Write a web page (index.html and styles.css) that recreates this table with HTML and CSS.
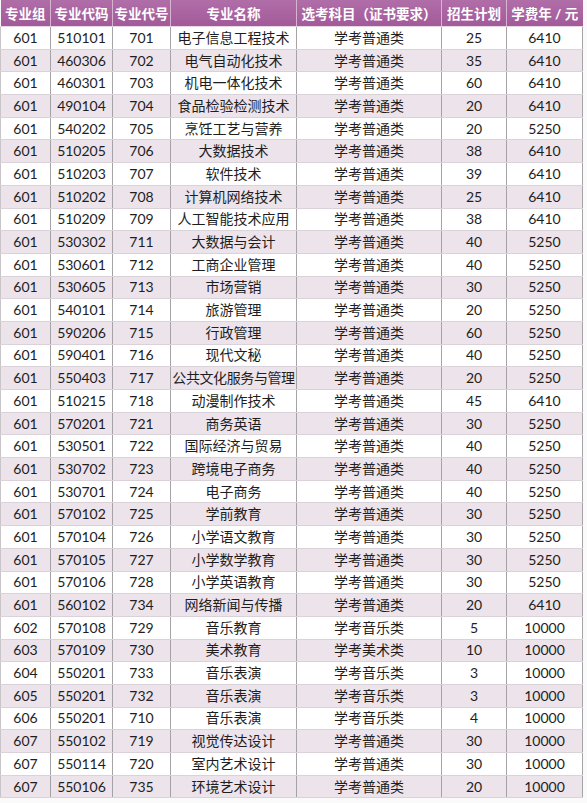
FILE: index.html
```html
<!DOCTYPE html>
<html lang="zh">
<head>
<meta charset="utf-8">
<link rel="stylesheet" href="styles.css">
</head>
<body>
<table class="plan">
<colgroup>
<col class="c1"><col class="c2"><col class="c3"><col class="c4"><col class="c5"><col class="c6"><col class="c7">
</colgroup>
<thead>
<tr><th>专业组</th><th>专业代码</th><th>专业代号</th><th>专业名称</th><th>选考科目（证书要求）</th><th>招生计划</th><th>学费年 / 元</th></tr>
</thead>
<tbody>
<tr><td>601</td><td>510101</td><td>701</td><td>电子信息工程技术</td><td>学考普通类</td><td>25</td><td>6410</td></tr>
<tr><td>601</td><td>460306</td><td>702</td><td>电气自动化技术</td><td>学考普通类</td><td>35</td><td>6410</td></tr>
<tr><td>601</td><td>460301</td><td>703</td><td>机电一体化技术</td><td>学考普通类</td><td>60</td><td>6410</td></tr>
<tr><td>601</td><td>490104</td><td>704</td><td>食品检验检测技术</td><td>学考普通类</td><td>20</td><td>6410</td></tr>
<tr><td>601</td><td>540202</td><td>705</td><td>烹饪工艺与营养</td><td>学考普通类</td><td>20</td><td>5250</td></tr>
<tr><td>601</td><td>510205</td><td>706</td><td>大数据技术</td><td>学考普通类</td><td>38</td><td>6410</td></tr>
<tr><td>601</td><td>510203</td><td>707</td><td>软件技术</td><td>学考普通类</td><td>39</td><td>6410</td></tr>
<tr><td>601</td><td>510202</td><td>708</td><td>计算机网络技术</td><td>学考普通类</td><td>25</td><td>6410</td></tr>
<tr><td>601</td><td>510209</td><td>709</td><td>人工智能技术应用</td><td>学考普通类</td><td>38</td><td>6410</td></tr>
<tr><td>601</td><td>530302</td><td>711</td><td>大数据与会计</td><td>学考普通类</td><td>40</td><td>5250</td></tr>
<tr><td>601</td><td>530601</td><td>712</td><td>工商企业管理</td><td>学考普通类</td><td>40</td><td>5250</td></tr>
<tr><td>601</td><td>530605</td><td>713</td><td>市场营销</td><td>学考普通类</td><td>30</td><td>5250</td></tr>
<tr><td>601</td><td>540101</td><td>714</td><td>旅游管理</td><td>学考普通类</td><td>20</td><td>5250</td></tr>
<tr><td>601</td><td>590206</td><td>715</td><td>行政管理</td><td>学考普通类</td><td>60</td><td>5250</td></tr>
<tr><td>601</td><td>590401</td><td>716</td><td>现代文秘</td><td>学考普通类</td><td>40</td><td>5250</td></tr>
<tr><td>601</td><td>550403</td><td>717</td><td class="tight">公共文化服务与管理</td><td>学考普通类</td><td>20</td><td>5250</td></tr>
<tr><td>601</td><td>510215</td><td>718</td><td>动漫制作技术</td><td>学考普通类</td><td>45</td><td>6410</td></tr>
<tr><td>601</td><td>570201</td><td>721</td><td>商务英语</td><td>学考普通类</td><td>30</td><td>5250</td></tr>
<tr><td>601</td><td>530501</td><td>722</td><td>国际经济与贸易</td><td>学考普通类</td><td>40</td><td>5250</td></tr>
<tr><td>601</td><td>530702</td><td>723</td><td>跨境电子商务</td><td>学考普通类</td><td>40</td><td>5250</td></tr>
<tr><td>601</td><td>530701</td><td>724</td><td>电子商务</td><td>学考普通类</td><td>40</td><td>5250</td></tr>
<tr><td>601</td><td>570102</td><td>725</td><td>学前教育</td><td>学考普通类</td><td>30</td><td>5250</td></tr>
<tr><td>601</td><td>570104</td><td>726</td><td>小学语文教育</td><td>学考普通类</td><td>30</td><td>5250</td></tr>
<tr><td>601</td><td>570105</td><td>727</td><td>小学数学教育</td><td>学考普通类</td><td>30</td><td>5250</td></tr>
<tr><td>601</td><td>570106</td><td>728</td><td>小学英语教育</td><td>学考普通类</td><td>30</td><td>5250</td></tr>
<tr><td>601</td><td>560102</td><td>734</td><td>网络新闻与传播</td><td>学考普通类</td><td>20</td><td>6410</td></tr>
<tr><td>602</td><td>570108</td><td>729</td><td>音乐教育</td><td>学考音乐类</td><td>5</td><td>10000</td></tr>
<tr><td>603</td><td>570109</td><td>730</td><td>美术教育</td><td>学考美术类</td><td>10</td><td>10000</td></tr>
<tr><td>604</td><td>550201</td><td>733</td><td>音乐表演</td><td>学考音乐类</td><td>3</td><td>10000</td></tr>
<tr><td>605</td><td>550201</td><td>732</td><td>音乐表演</td><td>学考音乐类</td><td>3</td><td>10000</td></tr>
<tr><td>606</td><td>550201</td><td>710</td><td>音乐表演</td><td>学考音乐类</td><td>4</td><td>10000</td></tr>
<tr><td>607</td><td>550102</td><td>719</td><td>视觉传达设计</td><td>学考普通类</td><td>30</td><td>10000</td></tr>
<tr><td>607</td><td>550114</td><td>720</td><td>室内艺术设计</td><td>学考普通类</td><td>30</td><td>10000</td></tr>
<tr><td>607</td><td>550106</td><td>735</td><td>环境艺术设计</td><td>学考普通类</td><td>20</td><td>10000</td></tr>
</tbody>
</table>
</body>
</html>
```

FILE: styles.css
```css
html, body {
  margin: 0;
  padding: 0;
  background: #fbfafb;
}

.plan {
  border-collapse: collapse;
  table-layout: fixed;
  width: 582px;
  font-family: Lato, "Noto Sans CJK SC", sans-serif;
  font-size: 14px;
  color: #1e1e1e;
}

.c1 { width: 50px; }
.c2 { width: 62px; }
.c3 { width: 58px; }
.c4 { width: 126px; }
.c5 { width: 145px; }
.c6 { width: 65px; }
.c7 { width: 76px; }

.plan th {
  height: 26px;
  padding: 0;
  background: linear-gradient(#b06ea8, #a25a99);
  color: #fff;
  font-weight: bold;
  font-size: 13.5px;
  text-align: center;
  white-space: nowrap;
  border-left: 1px solid #d7b5d2;
  border-bottom: 1px solid #e8d6e6;
}

.plan th:first-child {
  border-left: none;
}

.plan td {
  height: 21.7px;
  padding: 0;
  text-align: center;
  white-space: nowrap;
  border-left: 1px solid #a6a3a6;
  border-bottom: 1px solid #d9d2d9;
  line-height: 20px;
}

.plan td:first-child {
  border-left: 1px solid #c8c4c8;
}

.plan td:last-child {
  border-right: 1px solid #a6a3a6;
}

.plan tbody tr:nth-child(even) td {
  background: #ece3eb;
}

.plan tbody tr:nth-child(odd) td {
  background: #ffffff;
}

.plan td.tight {
  letter-spacing: -0.4px;
}
```
